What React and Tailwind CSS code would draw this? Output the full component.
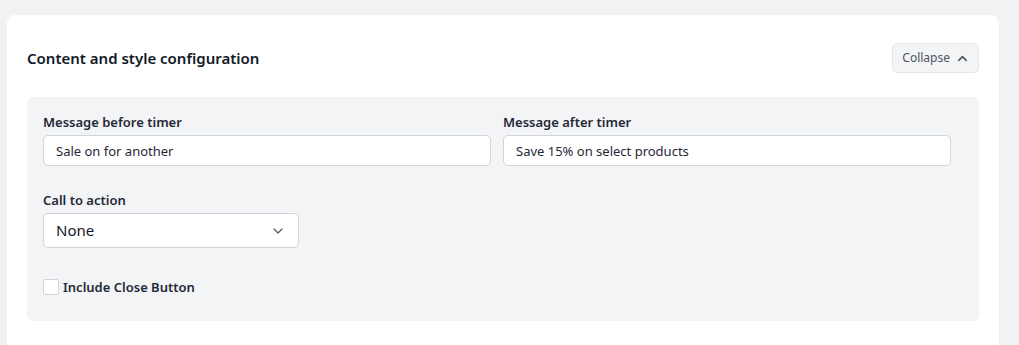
import { ChevronUp, ChevronDown } from "lucide-react";

export default function App() {
  return (
    <div
      className="min-h-screen w-full bg-[#f1f2f4] pl-[7px] pr-[20px] pt-[15px] text-[#1f2937]"
      style={{ fontFamily: '"Noto Sans", "Open Sans", sans-serif' }}
    >
      <div className="h-[340px] rounded-lg bg-white px-5 pt-[28px]">
        <div className="flex h-[30px] items-center justify-between">
          <h2 className="text-[15px] font-semibold text-[#111827]">Content and style configuration</h2>
          <button className="flex h-[30px] items-center gap-[5px] rounded-[5px] border border-[#e5e7eb] bg-[#f3f4f6] pl-[9px] pr-[8px] text-[12px] text-[#4b5563]">
            Collapse
            <ChevronUp size={15} strokeWidth={2.5} />
          </button>
        </div>

        <div className="mt-6 rounded-md bg-[#f3f4f6] px-4 pb-[25px] pt-4">
          <div className="grid w-[908px] grid-cols-2 gap-3">
            <div>
              <label className="mb-1 block text-[13px] font-semibold leading-[18px]">Message before timer</label>
              <input
                className="h-[31px] w-full rounded-[5px] border border-[#d1d5db] bg-white px-3 text-[13px] text-[#1f2937] outline-none"
                defaultValue="Sale on for another"
              />
            </div>
            <div>
              <label className="mb-1 block text-[13px] font-semibold leading-[18px]">Message after timer</label>
              <input
                className="h-[31px] w-full rounded-[5px] border border-[#d1d5db] bg-white px-3 text-[13px] text-[#1f2937] outline-none"
                defaultValue="Save 15% on select products"
              />
            </div>
          </div>

          <div className="mt-[25px] w-[256px]">
            <label className="mb-1 block text-[13px] font-semibold leading-[18px]">Call to action</label>
            <div className="flex h-[35px] items-center justify-between rounded-[5px] border border-[#d1d5db] bg-white pl-3 pr-3 text-[15px] text-[#111827]">
              <span>None</span>
              <ChevronDown size={16} strokeWidth={1.75} className="text-[#4b5563]" />
            </div>
          </div>

          <label className="mt-[30px] flex items-center gap-1 text-[13px] font-semibold leading-[18px]">
            <span className="h-4 w-4 rounded-[2px] border border-[#d1d5db] bg-white" />
            Include Close Button
          </label>
        </div>
      </div>
    </div>
  );
}
